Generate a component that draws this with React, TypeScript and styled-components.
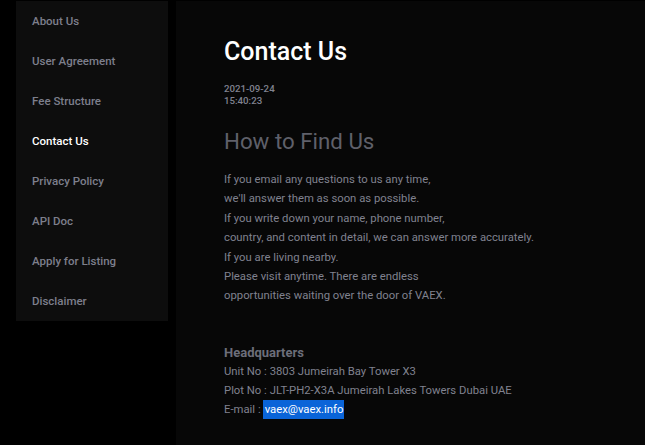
import React from 'react';
import styled, { createGlobalStyle } from 'styled-components';

const GlobalStyle = createGlobalStyle`
  html, body {
    margin: 0;
    padding: 0;
    background: #000;
  }
  body {
    font-family: Roboto, 'Liberation Sans', sans-serif;
  }
`;

const Page = styled.div`
  display: flex;
  align-items: flex-start;
  gap: 8px;
  padding: 1px 0 0 16px;
  min-height: 444px;
  box-sizing: border-box;
`;

const SideNav = styled.nav`
  width: 152px;
  flex-shrink: 0;
  background: #0d0d0d;
  padding: 0 0 0 16px;
  box-sizing: border-box;
  display: flex;
  flex-direction: column;
`;

const NavItem = styled.a<{ $active?: boolean }>`
  display: block;
  height: 40px;
  line-height: 40px;
  font-size: 11.5px;
  font-weight: 500;
  color: ${(p) => (p.$active ? '#ffffff' : '#7d7f8c')};
  text-decoration: none;
  cursor: pointer;
`;

const Main = styled.main`
  flex: 1;
  align-self: stretch;
  background: #070707;
  padding: 36px 48px 0;
  min-height: 444px;
  box-sizing: border-box;
`;

const Title = styled.h1`
  margin: 0;
  font-size: 25px;
  font-weight: 500;
  color: #fff;
  line-height: 30px;
`;

const Stamp = styled.div`
  margin-top: 16px;
  font-size: 9.7px;
  font-weight: 500;
  line-height: 12px;
  color: #80828f;
`;

const SubTitle = styled.h2`
  margin: 19px 0 0;
  font-size: 22.3px;
  font-weight: 400;
  line-height: 30px;
  color: #5f606a;
`;

const Para = styled.p`
  margin: 14px 0 0;
  font-size: 11.3px;
  line-height: 19.4px;
  color: #80828f;
`;

const Block = styled.div`
  margin-top: 38px;
  font-size: 11.3px;
  line-height: 19px;
  color: #80828f;
`;

const BlockTitle = styled.div`
  font-size: 13px;
  font-weight: 700;
  line-height: 18px;
  color: #6c6e7a;
`;

const Selected = styled.span`
  display: inline-block;
  height: 19px;
  margin-left: 2px;
  background: #0a64d8;
  color: #fff;
  padding: 0 1px 0 2px;
  vertical-align: top;
`;

const navItems = [
  'About Us',
  'User Agreement',
  'Fee Structure',
  'Contact Us',
  'Privacy Policy',
  'API Doc',
  'Apply for Listing',
  'Disclaimer',
];

export default function App() {
  return (
    <>
      <GlobalStyle />
      <Page>
        <SideNav>
          {navItems.map((item) => (
            <NavItem key={item} $active={item === 'Contact Us'}>
              {item}
            </NavItem>
          ))}
        </SideNav>
        <Main>
          <Title>Contact Us</Title>
          <Stamp>
            2021-09-24
            <br />
            15:40:23
          </Stamp>
          <SubTitle>How to Find Us</SubTitle>
          <Para>
            If you email any questions to us any time,
            <br />
            we'll answer them as soon as possible.
            <br />
            If you write down your name, phone number,
            <br />
            country, and content in detail, we can answer more accurately.
            <br />
            If you are living nearby.
            <br />
            Please visit anytime. There are endless
            <br />
            opportunities waiting over the door of VAEX.
          </Para>
          <Block>
            <BlockTitle>Headquarters</BlockTitle>
            <div>Unit No : 3803 Jumeirah Bay Tower X3</div>
            <div>Plot No : JLT-PH2-X3A Jumeirah Lakes Towers Dubai UAE</div>
            <div>
              E-mail :<Selected>vaex@vaex.info</Selected>
            </div>
          </Block>
        </Main>
      </Page>
    </>
  );
}
